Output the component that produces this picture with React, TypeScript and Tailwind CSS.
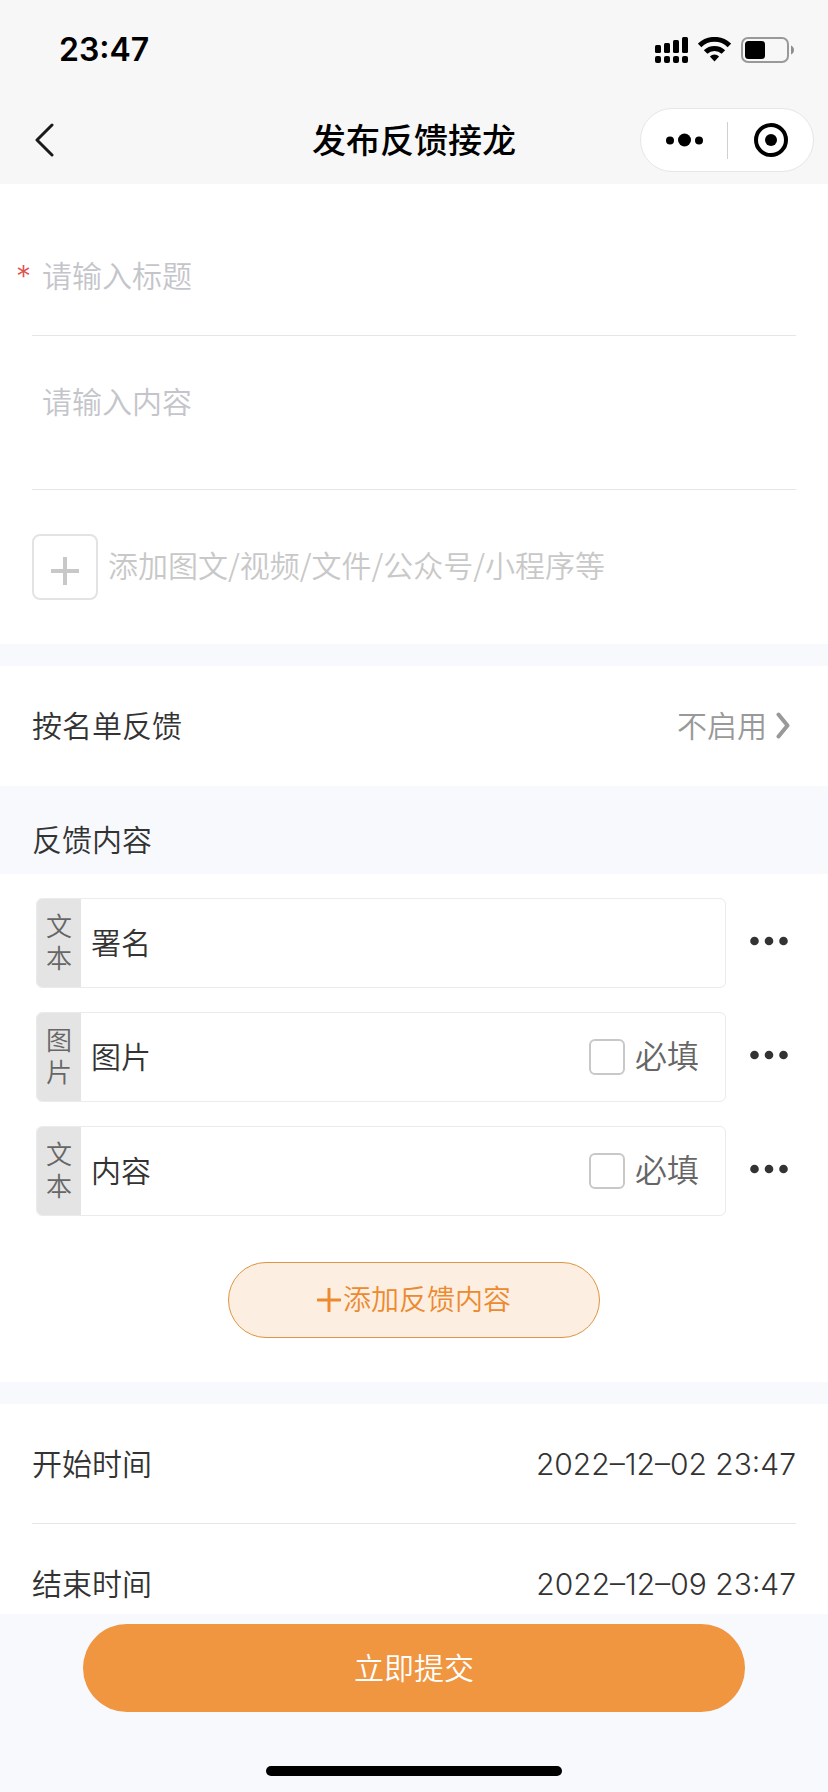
import { useState } from "react";

interface FeedbackField {
  id: string;
  type: string;
  name: string;
  optional: boolean;
}

const FIELDS: FeedbackField[] = [
  { id: "sign", type: "文本", name: "署名", optional: false },
  { id: "image", type: "图片", name: "图片", optional: true },
  { id: "content", type: "文本", name: "内容", optional: true },
];

function SignalIcon() {
  return (
    <svg width="33" height="26" viewBox="0 0 33 26" fill="black">
      <rect x="0" y="8" width="6" height="8" rx="1.5" />
      <rect x="9" y="6" width="6" height="10" rx="1.5" />
      <rect x="18" y="3" width="6" height="13" rx="1.5" />
      <rect x="27" y="0" width="6" height="16" rx="1.5" />
      <rect x="0" y="19" width="6" height="7" rx="2" />
      <rect x="9" y="19" width="6" height="7" rx="2" />
      <rect x="18" y="19" width="6" height="7" rx="2" />
      <rect x="27" y="19" width="6" height="7" rx="2" />
    </svg>
  );
}

function WifiIcon() {
  return (
    <svg width="33" height="26" viewBox="0 0 33 26" fill="none">
      <path d="M1.6 8.4A21.4 21.4 0 0 1 31.4 8.4" stroke="black" strokeWidth="5" />
      <path d="M7.6 15.1A12.5 12.5 0 0 1 25.4 15.1" stroke="black" strokeWidth="5" />
      <path d="M16.5 24.4L11.9 19.4A6.6 6.6 0 0 1 21.1 19.4Z" fill="black" />
    </svg>
  );
}

function BatteryIcon() {
  return (
    <svg width="53" height="26" viewBox="0 0 53 26" fill="none">
      <rect x="1" y="1" width="46" height="24" rx="6" stroke="#999999" strokeWidth="2" />
      <rect x="4" y="4" width="20" height="18" rx="3.5" fill="black" />
      <path d="M50 8.5C52 9.5 53 11 53 13S52 16.500 50 17.500Z" fill="#8f8f8f" />
    </svg>
  );
}

function Header() {
  return (
    <header className="shrink-0 bg-[#f7f7f7] text-black">
      <div className="flex h-24 items-center justify-between pt-1 pr-[34px] pl-[59px]">
        <span className="text-[32px] leading-10 font-semibold">23:47</span>
        <div className="flex items-center gap-2.5">
          <SignalIcon />
          <WifiIcon />
          <BatteryIcon />
        </div>
      </div>

      <nav className="grid h-[88px] grid-cols-[1fr_auto_1fr] items-center px-3.5">
        <button type="button" aria-label="返回" className="justify-self-start pl-4">
          <svg width="24" height="34" viewBox="0 0 24 34" fill="none">
            <path d="M22 2L7 17L22 32" stroke="#1a1a1a" strokeWidth="3" strokeLinecap="round" strokeLinejoin="round" />
          </svg>
        </button>
        <h1 className="pt-0.5 text-[34px] leading-10 font-medium">发布反馈接龙</h1>
        <div className="flex h-16 items-center justify-self-end rounded-full border border-[#e6e6e6] bg-white">
          <button type="button" aria-label="更多" className="flex h-full w-[86px] items-center justify-center">
            <svg width="38" height="14" viewBox="0 0 38 14" fill="black">
              <circle cx="5" cy="7.500" r="4" />
              <circle cx="19.500" cy="7" r="6.500" />
              <circle cx="34" cy="7.500" r="4" />
            </svg>
          </button>
          <span className="h-[37px] w-px bg-[#d0d0d0]" />
          <button type="button" aria-label="关闭" className="flex h-full w-[85px] items-center justify-center">
            <svg width="34" height="34" viewBox="0 0 34 34" fill="none">
              <circle cx="17" cy="17" r="15" stroke="black" strokeWidth="4" />
              <circle cx="17" cy="17" r="6" fill="black" />
            </svg>
          </button>
        </div>
      </nav>
    </header>
  );
}

function FieldRow({ field }: { field: FeedbackField }) {
  const [required, setRequired] = useState(false);

  return (
    <li className="flex items-center pl-1">
      <div className="flex h-[90px] flex-1 items-stretch overflow-hidden rounded-md border border-[#ebebeb]">
        <span className="flex w-11 shrink-0 items-center bg-[#e4e4e4] px-2 text-center text-[26px] leading-8 text-[#666666]">
          {field.type}
        </span>
        <input
          aria-label="反馈项名称"
          defaultValue={field.name}
          className="min-w-0 flex-1 px-2.5 text-[30px] leading-10 outline-none"
        />
        {field.optional && (
          <label className="flex shrink-0 items-center gap-2.5 pr-[26px] text-[32px] leading-10 text-[#666666]">
            <input
              type="checkbox"
              checked={required}
              onChange={(e) => setRequired(e.target.checked)}
              className="size-9 appearance-none rounded-md border-2 border-[#c8c8c8] bg-white checked:bg-[#f09540]"
            />
            必填
          </label>
        )}
      </div>
      <button type="button" aria-label={`${field.name}操作`} className="pt-1 pr-2 pb-2 pl-6">
        <svg width="38" height="10" viewBox="0 0 38 10" fill="#333333">
          <circle cx="4.500" cy="5" r="4.300" />
          <circle cx="19" cy="5" r="4.300" />
          <circle cx="33.500" cy="5" r="4.300" />
        </svg>
      </button>
    </li>
  );
}

function TimeRow({ label, value }: { label: string; value: string }) {
  return (
    <div className="flex h-[120px] items-center justify-between border-b border-[#e5e5e5]">
      <span>{label}</span>
      <button type="button" aria-label={label}>
        {value}
      </button>
    </div>
  );
}

export default function App() {
  return (
    <div className="flex h-screen flex-col bg-[#f7f9fd] font-[Inter,'Noto_Sans_CJK_SC',sans-serif] text-[30px] leading-10 font-[350] text-[#333333]">
      <Header />

      <main className="min-h-0 flex-1 overflow-y-auto [scrollbar-width:none]">
        {/* Title, content and attachments */}
        <section className="bg-white px-8 pt-8">
          <div className="flex h-[120px] items-center border-b border-[#e5e5e5]">
            <label htmlFor="title" className="-ml-4 w-[26px] shrink-0 text-[#e0524f]">
              *
            </label>
            <input
              id="title"
              placeholder="请输入标题"
              className="min-w-0 flex-1 leading-10 outline-none placeholder:text-[#c4c5ca]"
            />
          </div>
          <textarea
            aria-label="内容"
            placeholder="请输入内容"
            className="block h-[154px] w-full resize-none border-b border-[#e5e5e5] px-2.5 pt-[46px] leading-10 outline-none placeholder:text-[#c4c5ca]"
          />
          <button type="button" className="flex h-[154px] w-full items-center gap-2.5 text-left text-[#c8c8c8]">
            <span className="flex size-[66px] shrink-0 items-center justify-center rounded-lg border-2 border-[#e3e3e3] pt-2">
              <svg width="28" height="28" viewBox="0 0 28 28" stroke="#c8c8c8" strokeWidth="4">
                <path d="M0 14H28M14 0V28" />
              </svg>
            </span>
            <span className="pb-1.5 font-['Noto_Sans_CJK_SC',sans-serif]">添加图文/视频/文件/公众号/小程序等</span>
          </button>
        </section>

        <section className="mt-[22px] bg-white px-8">
          <button type="button" className="flex h-[120px] w-full items-center justify-between">
            <span>按名单反馈</span>
            <span className="flex items-center gap-2 pr-1.5 text-[#999999]">
              不启用
              <svg width="15" height="28" viewBox="0 0 15 28" fill="none">
                <path d="M3.500 2.500L12.500 13.500L3.500 24.500" stroke="#999999" strokeWidth="4" strokeLinecap="round" strokeLinejoin="round" />
              </svg>
            </span>
          </button>
        </section>

        <h2 className="flex h-[88px] items-center px-8 pt-5">反馈内容</h2>

        {/* Feedback fields */}
        <section className="flex flex-col items-center bg-white px-8 pt-6 pb-11">
          <ul className="flex w-full flex-col gap-6">
            {FIELDS.map((field) => (
              <FieldRow key={field.id} field={field} />
            ))}
          </ul>
          <button
            type="button"
            className="mt-[46px] flex h-[76px] w-[372px] items-center justify-center gap-0.5 rounded-full border border-[#e0943f] bg-[#fceee1] text-[28px] text-[#ec8a2f]"
          >
            <svg width="24" height="24" viewBox="0 0 24 24" stroke="#ec8a2f" strokeWidth="3">
              <path d="M1 12H23M12 1V23" strokeLinecap="round" />
            </svg>
            添加反馈内容
          </button>
        </section>

        <section className="mt-[22px] bg-white px-8">
          <TimeRow label="开始时间" value="2022–12–02 23:47" />
          <TimeRow label="结束时间" value="2022–12–09 23:47" />
        </section>
      </main>

      <footer className="flex shrink-0 flex-col items-center pt-2.5 pb-4">
        <button type="submit" className="h-[88px] w-4/5 rounded-full bg-[#f09540] text-white">
          立即提交
        </button>
        <span className="mt-[54px] h-2.5 w-[296px] rounded-full bg-black" />
      </footer>
    </div>
  );
}
